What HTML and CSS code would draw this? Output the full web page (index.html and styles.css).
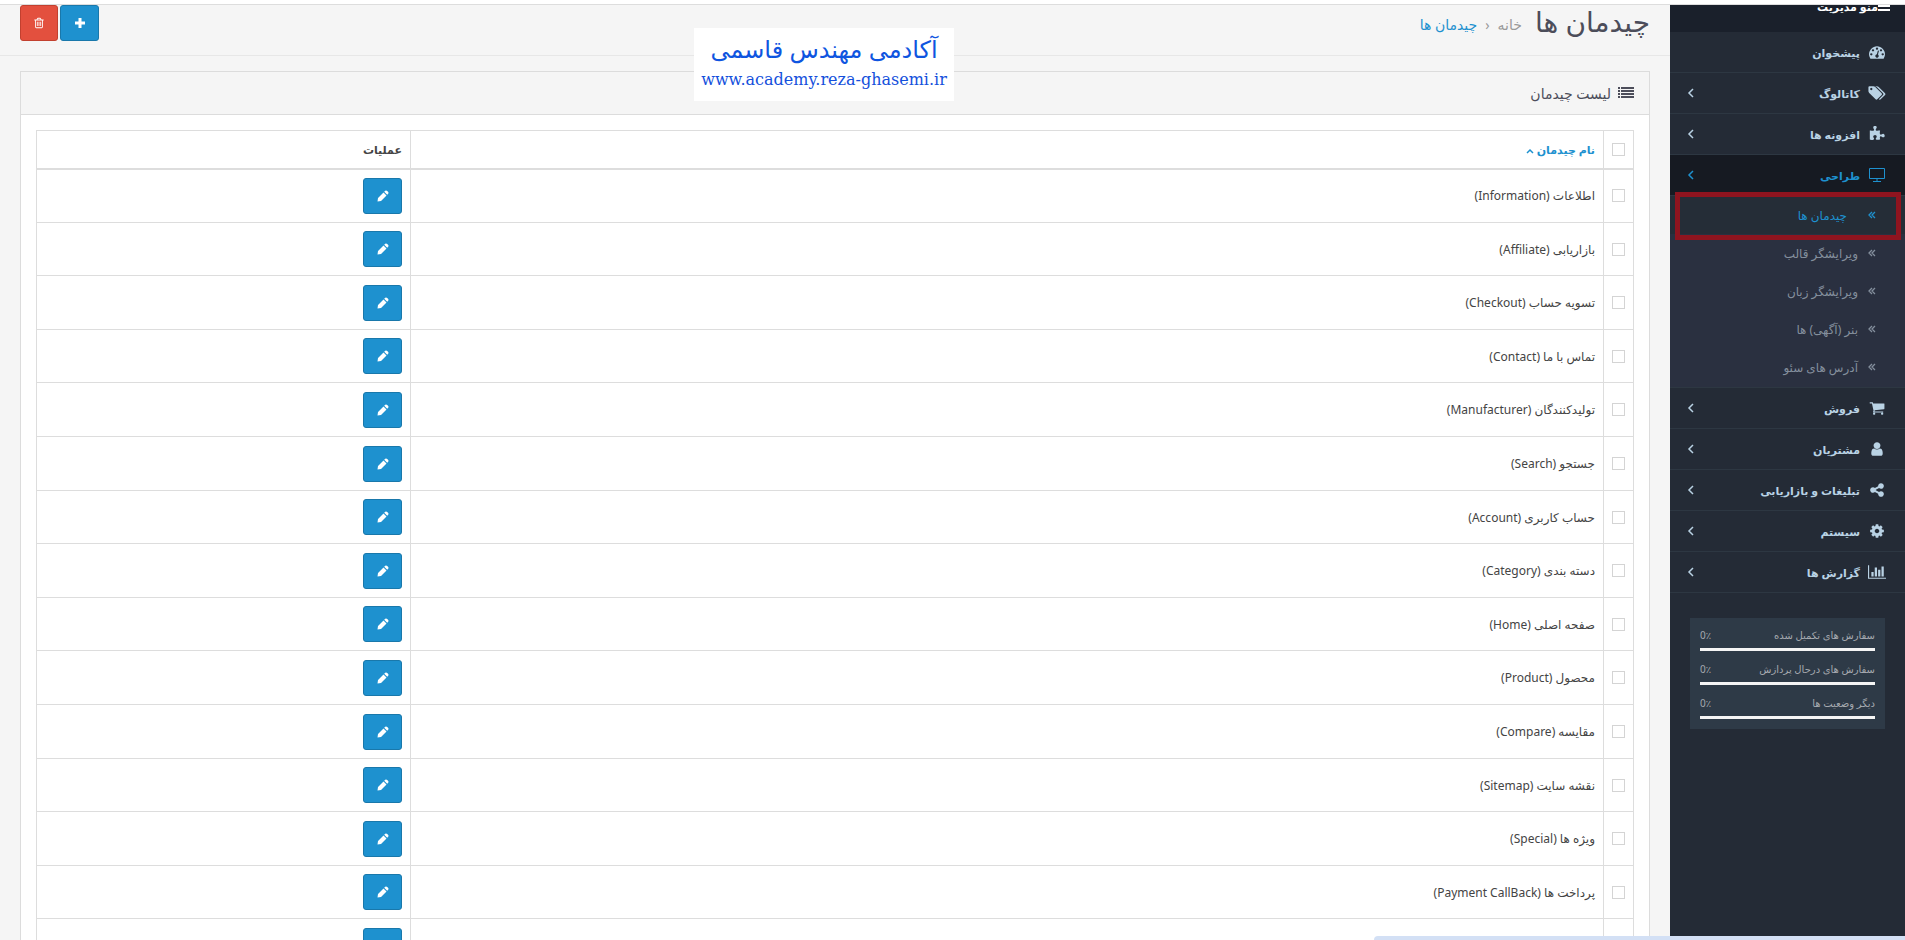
FILE: index.html
```html
<!DOCTYPE html>
<html lang="fa" dir="rtl">
<head>
    <meta charset="UTF-8">
    <meta name="viewport" content="width=device-width, initial-scale=1.0">
    <title>چیدمان ها</title>
    <link rel="stylesheet" href="styles.css">
</head>
<body>
    <svg class="sprite" aria-hidden="true">
        <symbol id="dashboard" viewBox="0 0 1792 1792"><path d="M384 1152q0-53-37.500-90.500t-90.500-37.500-90.500 37.500-37.500 90.500 37.500 90.500 90.500 37.500 90.500-37.500 37.500-90.500zm192-448q0-53-37.500-90.500t-90.500-37.500-90.500 37.500-37.500 90.500 37.500 90.500 90.500 37.500 90.500-37.500 37.500-90.500zm428 481l101-382q6-26-7.500-48.500t-38.500-29.500-48 6.500-30 39.500l-101 382q-60 5-107 43.500t-63 98.500q-20 77 20 146t117 89 146-20 89-117q16-60-6-117t-72-91zm660-33q0-53-37.500-90.500t-90.500-37.500-90.500 37.500-37.500 90.500 37.500 90.500 90.500 37.500 90.500-37.500 37.500-90.500zm-640-640q0-53-37.500-90.500t-90.500-37.500-90.500 37.500-37.500 90.500 37.500 90.500 90.500 37.500 90.500-37.500 37.500-90.500zm448 192q0-53-37.500-90.500t-90.500-37.500-90.500 37.500-37.500 90.500 37.500 90.500 90.500 37.500 90.500-37.500 37.500-90.500zm320 448q0 261-141 483-19 29-54 29h-1402q-35 0-54-29-141-221-141-483 0-182 71-348t191-286 286-191 348-71 348 71 286 191 191 286 71 348z"/></symbol>
        <symbol id="tags" viewBox="0 0 1920 1792"><path d="M448 448q0-53-37.500-90.500t-90.500-37.500-90.500 37.500-37.500 90.500 37.500 90.500 90.500 37.500 90.500-37.500 37.500-90.500zm1067 576q0 53-37 90l-491 492q-39 37-91 37-53 0-90-37l-715-716q-38-37-64.500-101t-26.500-117v-416q0-52 38-90t90-38h416q53 0 117 26.500t102 64.500l715 714q37 39 37 91zm384 0q0 53-37 90l-491 492q-39 37-91 37-36 0-59-14t-53-45l470-470q37-37 37-90 0-52-37-91l-715-714q-38-38-102-64.500t-117-26.500h224q53 0 117 26.500t102 64.500l715 714q37 39 37 91z"/></symbol>
        <symbol id="puzzle" viewBox="0 0 1792 1792"><path d="M1755 1083q0 81-44.500 135t-123.500 54q-41 0-77.500-17.500t-59-38-56.500-38-71-17.500q-110 0-110 124 0 39 16 115t15 115v5q-22 0-33 1-34 3-97.500 11.500t-115.500 13.500-98 5q-61 0-103-26.500t-42-83.500q0-37 17.500-71t38-56.500 38-59 17.500-77.500q0-79-54-123.500t-135-44.500q-84 0-143 45.500t-59 127.500q0 43 15 83t33.500 64.500 33.500 53 15 50.500q0 45-46 89-37 35-117 35-95 0-245-24-9-2-27.500-4t-27.500-4l-13-2q-1 0-3-1-2 0-2-1v-1024q2 1 17.500 3.500t34 5 21.500 3.500q150 24 245 24 80 0 117-35 46-44 46-89 0-22-15-50.500t-33.500-53-33.500-64.500-15-83q0-82 59-127.500t144-45.500q80 0 134 44.500t54 123.500q0 41-17.500 77.500t-38 59-38 56.500-17.500 71q0 57 42 83.500t103 26.500q64 0 180-15t163-17v2q-1 2-3.500 17.500t-5 34-3.500 21.500q-24 150-24 245 0 80 35 117 44 46 89 46 22 0 50.500-15t53-33.500 64.500-33.500 83-15q82 0 127.500 59t45.500 143z"/></symbol>
        <symbol id="desktop" viewBox="0 0 18 16"><path d="M1.500 1.500h15v10h-15zM9 11.500v2.500M5 14.500h8" fill="none" stroke="currentColor"/></symbol>
        <symbol id="cart" viewBox="0 0 1792 1792"><path d="M704 1536q0 52-38 90t-90 38-90-38-38-90 38-90 90-38 90 38 38 90zm896 0q0 52-38 90t-90 38-90-38-38-90 38-90 90-38 90 38 38 90zm128-1088v512q0 24-16.500 42.500t-40.500 21.500l-1044 122q13 60 13 70 0 16-24 64h920q26 0 45 19t19 45-19 45-45 19h-1024q-26 0-45-19t-19-45q0-11 8-31.500t16-36 21.500-40 15.500-29.500l-177-823h-204q-26 0-45-19t-19-45 19-45 45-19h256q16 0 28.500 6.500t19.500 15.500 13 24.500 8 26 5.500 29.500 4.500 26h1201q26 0 45 19t19 45z"/></symbol>
        <symbol id="user" viewBox="128 0 1536 1792"><path d="M1536 1399q0 109-62.500 187t-150.500 78h-854q-88 0-150.500-78t-62.500-187q0-85 8.500-160.500t31.500-152 58.500-131 94-89 134.500-34.500q131 128 313 128t313-128q76 0 134.500 34.500t94 89 58.500 131 31.500 152 8.500 160.500zm-256-887q0 159-112.500 271.500t-271.500 112.500-271.500-112.500-112.500-271.500 112.500-271.500 271.500-112.500 271.500 112.500 112.500 271.500z"/></symbol>
        <symbol id="share" viewBox="0 0 1792 1792"><path d="M1344 1024q133 0 226.500 93.500t93.500 226.500-93.500 226.500-226.500 93.500-226.500-93.500-93.500-226.500q0-12 2-34l-360-180q-92 86-218 86-133 0-226.500-93.500t-93.500-226.500 93.500-226.500 226.500-93.500q126 0 218 86l360-180q-2-22-2-34 0-133 93.500-226.500t226.500-93.500 226.500 93.500 93.500 226.500-93.500 226.500-226.500 93.500q-126 0-218-86l-360 180q2 22 2 34t-2 34l360 180q92-86 218-86z"/></symbol>
        <symbol id="cog" viewBox="0 0 1792 1792"><path d="M1152 896q0-106-75-181t-181-75-181 75-75 181 75 181 181 75 181-75 75-181zm512-109v222q0 12-8 23t-20 13l-185 28q-19 54-39 91 35 50 107 138 10 12 10 25t-9 23q-27 37-99 108t-94 71q-12 0-26-9l-138-108q-44 23-91 38-16 136-29 186-7 28-36 28h-222q-14 0-24.500-8.500t-11.500-21.500l-28-184q-49-16-90-37l-141 107q-10 9-25 9-14 0-25-11-126-114-165-168-7-10-7-23 0-12 8-23 15-21 51-66.500t54-70.500q-27-50-41-99l-183-27q-13-2-21-12.500t-8-23.500v-222q0-12 8-23t19-13l186-28q14-46 39-92-40-57-107-138-10-12-10-24 0-10 9-23 26-36 98.500-107.500t94.500-71.500q13 0 26 10l138 107q44-23 91-38 16-136 29-186 7-28 36-28h222q14 0 24.500 8.500t11.500 21.500l28 184q49 16 90 37l142-107q9-9 24-9 13 0 25 10 129 119 165 170 7 8 7 22 0 12-8 23-15 21-51 66.500t-54 70.500q26 50 41 98l183 28q13 2 21 12.500t8 23.500z"/></symbol>
        <symbol id="chart" viewBox="0 0 2048 1792"><path d="M640 896v512h-256v-512h256zm384-512v1024h-256v-1024h256zm1024 1152v128h-2048v-1536h128v1408h1920zm-640-896v768h-256v-768h256zm384-384v1152h-256v-1152h256z"/></symbol>
        <symbol id="pencil" viewBox="0 0 12 12"><path d="M.5 11.500l.5-3.500 5.500-5.500 3 3-5.500 5.500zM7.200 1.800l1-1q1-.8 2 .2l.8.800q1 1 .2 2l-1 1z"/></symbol>
        <symbol id="trash" viewBox="0 0 1792 1792"><path d="M704 736v576q0 14-9 23t-23 9h-64q-14 0-23-9t-9-23v-576q0-14 9-23t23-9h64q14 0 23 9t9 23zm256 0v576q0 14-9 23t-23 9h-64q-14 0-23-9t-9-23v-576q0-14 9-23t23-9h64q14 0 23 9t9 23zm256 0v576q0 14-9 23t-23 9h-64q-14 0-23-9t-9-23v-576q0-14 9-23t23-9h64q14 0 23 9t9 23zm128 724v-948h-896v948q0 22 7 40.500t14.500 27 10.500 8.500h832q3 0 10.500-8.500t14.500-27 7-40.500zm-672-1076h448l-48-117q-7-9-17-11h-317q-10 2-17 11zm928 32v64q0 14-9 23t-23 9h-96v948q0 83-47 143.500t-113 60.500h-832q-66 0-113-58.500t-47-141.500v-952h-96q-14 0-23-9t-9-23v-64q0-14 9-23t23-9h309l70-167q15-37 54-63t79-26h320q40 0 79 26t54 63l70 167h309q14 0 23 9t9 23z"/></symbol>
        <symbol id="plus" viewBox="0 0 12 12"><path d="M4.500 1h3v3.500h3.500v3h-3.500v3.500h-3v-3.500h-3.500v-3h3.500z"/></symbol>
        <symbol id="list" viewBox="0 0 16 14"><path d="M0 1h2v2h-2zM3 1h13v2h-13zM0 4h2v2h-2zM3 4h13v2h-13zM0 7h2v2h-2zM3 7h13v2h-13zM0 10h2v2h-2zM3 10h13v2h-13z"/></symbol>
        <symbol id="bars" viewBox="0 0 12 12"><path d="M0 1h12v2h-12zM0 5h12v2h-12zM0 9h12v2h-12z"/></symbol>
        <symbol id="angle" viewBox="0 0 8 10"><path d="M6 1L2 5l4 4" fill="none" stroke="currentColor" stroke-width="1.500"/></symbol>
        <symbol id="double" viewBox="0 0 8 8"><path d="M4 1L1 4l3 3M7 1L4 4l3 3" fill="none" stroke="currentColor" stroke-width="1.300"/></symbol>
        <symbol id="up" viewBox="0 0 8 6"><path d="M1 5l3-3 3 3" fill="none" stroke="currentColor" stroke-width="1.500"/></symbol>
    </svg>

    <div class="topbar"></div>
    <div class="wrapper">
        <nav class="sidebar">
            <div class="menu-title"><svg><use href="#bars"/></svg>منو مدیریت</div>
            <ul class="menu">
                <li><a href="#"><svg class="icon"><use href="#dashboard"/></svg>پیشخوان</a></li>
                <li><a href="#"><svg class="icon"><use href="#tags"/></svg>کاتالوگ<svg class="angle"><use href="#angle"/></svg></a></li>
                <li><a href="#"><svg class="icon"><use href="#puzzle"/></svg>افزونه ها<svg class="angle"><use href="#angle"/></svg></a></li>
                <li class="open">
                    <a href="#"><svg class="icon"><use href="#desktop"/></svg>طراحی<svg class="angle"><use href="#angle"/></svg></a>
                    <ul class="submenu">
                        <li class="current"><a href="#"><svg><use href="#double"/></svg>چیدمان ها</a></li>
                        <li><a href="#"><svg><use href="#double"/></svg>ویرایشگر قالب</a></li>
                        <li><a href="#"><svg><use href="#double"/></svg>ویرایشگر زبان</a></li>
                        <li><a href="#"><svg><use href="#double"/></svg>بنر (آگهی) ها</a></li>
                        <li><a href="#"><svg><use href="#double"/></svg>آدرس های سئو</a></li>
                    </ul>
                </li>
                <li><a href="#"><svg class="icon"><use href="#cart"/></svg>فروش<svg class="angle"><use href="#angle"/></svg></a></li>
                <li><a href="#"><svg class="icon"><use href="#user"/></svg>مشتریان<svg class="angle"><use href="#angle"/></svg></a></li>
                <li><a href="#"><svg class="icon"><use href="#share"/></svg>تبلیغات و بازاریابی<svg class="angle"><use href="#angle"/></svg></a></li>
                <li><a href="#"><svg class="icon"><use href="#cog"/></svg>سیستم<svg class="angle"><use href="#angle"/></svg></a></li>
                <li><a href="#"><svg class="icon"><use href="#chart"/></svg>گزارش ها<svg class="angle"><use href="#angle"/></svg></a></li>
            </ul>
            <ul class="stats">
                <li><div><span>سفارش های تکمیل شده</span><span dir="ltr">0٪</span></div></li>
                <li><div><span>سفارش های درحال پردازش</span><span dir="ltr">0٪</span></div></li>
                <li><div><span>دیگر وضعیت ها</span><span dir="ltr">0٪</span></div></li>
            </ul>
        </nav>

        <main class="content">
            <header class="page-header">
                <h1>چیدمان ها</h1>
                <div class="breadcrumb">
                    <a href="#">خانه</a>
                    <span>‹</span>
                    <a href="#" class="active">چیدمان ها</a>
                </div>
                <div class="buttons">
                    <button type="button" class="btn" aria-label="افزودن"><svg><use href="#plus"/></svg></button>
                    <button type="button" class="btn danger" aria-label="حذف"><svg><use href="#trash"/></svg></button>
                </div>
            </header>

            <section class="panel">
                <h2><svg><use href="#list"/></svg>لیست چیدمان</h2>
                <div class="panel-body">
                    <table>
                        <thead>
                            <tr>
                                <th class="check"><input type="checkbox" aria-label="انتخاب همه"></th>
                                <th><a href="#">نام چیدمان <svg><use href="#up"/></svg></a></th>
                                <th class="action">عملیات</th>
                            </tr>
                        </thead>
                        <tbody>
                            <tr>
                                <td><input type="checkbox" aria-label="Information"></td>
                                <td>اطلاعات (Information)</td>
                                <td><button type="button" class="btn" aria-label="ویرایش"><svg><use href="#pencil"/></svg></button></td>
                            </tr>
                            <tr>
                                <td><input type="checkbox" aria-label="Affiliate"></td>
                                <td>بازاریابی (Affiliate)</td>
                                <td><button type="button" class="btn" aria-label="ویرایش"><svg><use href="#pencil"/></svg></button></td>
                            </tr>
                            <tr>
                                <td><input type="checkbox" aria-label="Checkout"></td>
                                <td>تسویه حساب (Checkout)</td>
                                <td><button type="button" class="btn" aria-label="ویرایش"><svg><use href="#pencil"/></svg></button></td>
                            </tr>
                            <tr>
                                <td><input type="checkbox" aria-label="Contact"></td>
                                <td>تماس با ما (Contact)</td>
                                <td><button type="button" class="btn" aria-label="ویرایش"><svg><use href="#pencil"/></svg></button></td>
                            </tr>
                            <tr>
                                <td><input type="checkbox" aria-label="Manufacturer"></td>
                                <td>تولیدکنندگان (Manufacturer)</td>
                                <td><button type="button" class="btn" aria-label="ویرایش"><svg><use href="#pencil"/></svg></button></td>
                            </tr>
                            <tr>
                                <td><input type="checkbox" aria-label="Search"></td>
                                <td>جستجو (Search)</td>
                                <td><button type="button" class="btn" aria-label="ویرایش"><svg><use href="#pencil"/></svg></button></td>
                            </tr>
                            <tr>
                                <td><input type="checkbox" aria-label="Account"></td>
                                <td>حساب کاربری (Account)</td>
                                <td><button type="button" class="btn" aria-label="ویرایش"><svg><use href="#pencil"/></svg></button></td>
                            </tr>
                            <tr>
                                <td><input type="checkbox" aria-label="Category"></td>
                                <td>دسته بندی (Category)</td>
                                <td><button type="button" class="btn" aria-label="ویرایش"><svg><use href="#pencil"/></svg></button></td>
                            </tr>
                            <tr>
                                <td><input type="checkbox" aria-label="Home"></td>
                                <td>صفحه اصلی (Home)</td>
                                <td><button type="button" class="btn" aria-label="ویرایش"><svg><use href="#pencil"/></svg></button></td>
                            </tr>
                            <tr>
                                <td><input type="checkbox" aria-label="Product"></td>
                                <td>محصول (Product)</td>
                                <td><button type="button" class="btn" aria-label="ویرایش"><svg><use href="#pencil"/></svg></button></td>
                            </tr>
                            <tr>
                                <td><input type="checkbox" aria-label="Compare"></td>
                                <td>مقایسه (Compare)</td>
                                <td><button type="button" class="btn" aria-label="ویرایش"><svg><use href="#pencil"/></svg></button></td>
                            </tr>
                            <tr>
                                <td><input type="checkbox" aria-label="Sitemap"></td>
                                <td>نقشه سایت (Sitemap)</td>
                                <td><button type="button" class="btn" aria-label="ویرایش"><svg><use href="#pencil"/></svg></button></td>
                            </tr>
                            <tr>
                                <td><input type="checkbox" aria-label="Special"></td>
                                <td>ویژه ها (Special)</td>
                                <td><button type="button" class="btn" aria-label="ویرایش"><svg><use href="#pencil"/></svg></button></td>
                            </tr>
                            <tr>
                                <td><input type="checkbox" aria-label="Payment CallBack"></td>
                                <td>پرداخت ها (Payment CallBack)</td>
                                <td><button type="button" class="btn" aria-label="ویرایش"><svg><use href="#pencil"/></svg></button></td>
                            </tr>
                            <tr>
                                <td></td>
                                <td></td>
                                <td><button type="button" class="btn" aria-label="ویرایش"><svg><use href="#pencil"/></svg></button></td>
                            </tr>
                        </tbody>
                    </table>
                </div>
            </section>
        </main>
    </div>

    <div class="watermark">
        <strong>آکادمی مهندس قاسمی</strong>
        <span dir="ltr">www.academy.reza-ghasemi.ir</span>
    </div>
    <div class="status"></div>
</body>
</html>
```
FILE: styles.css
```css
* {
    box-sizing: border-box;
}

body {
    margin: 0;
    height: 100vh;
    overflow: hidden;
    display: flex;
    flex-direction: column;
    font-family: "Noto Sans", "DejaVu Sans", sans-serif;
    font-size: 12px;
    color: #4c4d5a;
    background: #f5f5f5;
}

ul {
    list-style: none;
    margin: 0;
    padding: 0;
}

a {
    color: #1e91cf;
    text-decoration: none;
}

svg {
    fill: currentColor;
    flex: none;
}

.sprite {
    position: absolute;
    width: 0;
    height: 0;
}

.topbar {
    flex: none;
    height: 5px;
    background: #fff;
    border-bottom: 1px solid #ddd;
}

.wrapper {
    display: flex;
    flex: 1;
    min-height: 0;
}

/* sidebar */
.sidebar {
    width: 235px;
    flex: none;
    background: #242b36;
}

.menu-title {
    height: 27px;
    padding-right: 15px;
    overflow: hidden;
    display: flex;
    align-items: flex-start;
    font-size: 11px;
    line-height: 4px;
    font-weight: bold;
    color: #fff;
    background: #1a202b;
}

.menu-title svg {
    width: 12px;
    height: 12px;
    margin-top: -5px;
}

.menu > li > a {
    display: flex;
    align-items: center;
    height: 41px;
    padding: 0 19px 0 17px;
    border-bottom: 1px solid #2d3742;
    font-size: 11px;
    font-weight: bold;
    color: #b9d2e4;
}

.menu .icon {
    width: 18px;
    height: 16px;
    margin-left: 8px;
}

.menu .angle {
    width: 8px;
    height: 10px;
    margin-right: auto;
}

.menu > .open > a {
    color: #1e91cf;
    background: #161a22;
}

.submenu {
    position: relative;
    padding-bottom: 1px;
    background: #2a3040;
    border-bottom: 1px solid #2d3742;
}

/* highlight frame around the selected entry */
.submenu::before {
    content: "";
    box-sizing: border-box;
    position: absolute;
    top: -4px;
    right: 4px;
    left: 5px;
    height: 48px;
    border: 5px solid #8f141f;
}

.submenu a {
    display: flex;
    align-items: center;
    height: 38px;
    padding-right: 29px;
    color: #848f9d;
}

.submenu svg {
    width: 8px;
    height: 8px;
    margin-left: 10px;
}

.submenu .current a {
    color: #1e91cf;
    background: #252d37;
}

.submenu .current svg {
    margin-left: 21px;
}

.stats {
    margin: 25px 20px 0;
    padding: 9px 10px 0;
    overflow: hidden;
    background: #2e3a47;
    color: #a5a9af;
    font-size: 10px;
}

.stats li {
    margin-bottom: 10px;
    border-bottom: 3px solid #f5f5f5;
}

.stats div {
    display: flex;
    justify-content: space-between;
    height: 21px;
    line-height: 16px;
}

/* content */
.content {
    flex: 1;
    min-width: 0;
}

.page-header {
    display: flex;
    align-items: flex-start;
    height: 51px;
    padding: 0 20px;
    border-bottom: 1px solid #e7e7e7;
}

h1 {
    margin: 0;
    font-size: 28px;
    font-weight: normal;
    line-height: 32px;
}

.breadcrumb {
    display: flex;
    gap: 8px;
    margin-right: 13px;
    font-size: 14px;
    line-height: 40px;
}

.breadcrumb a,
.breadcrumb span {
    color: #999;
}

.breadcrumb .active {
    color: #1e91cf;
}

.buttons {
    display: flex;
    gap: 2px;
    margin-right: auto;
}

.btn {
    display: flex;
    align-items: center;
    justify-content: center;
    width: 39px;
    height: 36px;
    padding: 0;
    border: 1px solid #1978ab;
    border-radius: 3px;
    background: #1e91cf;
    color: #fff;
}

.btn svg {
    width: 12px;
    height: 12px;
}

.btn.danger {
    width: 38px;
    background: #e3503e;
    border-color: #c2402f;
}

.panel {
    margin: 15px 20px;
    background: #fff;
    border: 1px solid #dcdcdc;
}

.panel h2 {
    display: flex;
    align-items: center;
    gap: 7px;
    height: 43px;
    margin: 0;
    padding: 0 15px;
    font-size: 14px;
    font-weight: normal;
    background: #f5f5f5;
    border-bottom: 1px solid #dcdcdc;
}

.panel h2 svg {
    width: 16px;
    height: 14px;
}

.panel-body {
    padding: 15px;
}

table {
    width: 100%;
    border-collapse: collapse;
    table-layout: fixed;
    color: #444;
}

th,
td {
    padding: 0 8px;
    border: 1px solid #ddd;
    text-align: right;
}

th {
    height: 38px;
    border-bottom-width: 2px;
    font-size: 11px;
}

td {
    height: 54px;
}

/* keeps the row rhythm between 53 and 54 pixels */
tr:nth-child(5n + 2) td,
tr:nth-child(5n + 4) td {
    height: 53px;
}

.check {
    width: 30px;
}

.action {
    width: 374px;
}

th svg {
    width: 8px;
    height: 6px;
    vertical-align: middle;
}

input[type="checkbox"] {
    appearance: none;
    display: block;
    width: 13px;
    height: 13px;
    margin: 0;
    border: 1px solid #d4d4d4;
    background: #fff;
}

/* overlays */
.watermark {
    position: absolute;
    top: 28px;
    left: 694px;
    width: 260px;
    height: 73px;
    display: flex;
    flex-direction: column;
    align-items: center;
    background: #fff;
    color: #1450dc;
}

.watermark strong {
    font-size: 24px;
    font-weight: normal;
    line-height: 42px;
    color: #0f55e0;
}

.watermark span {
    font-family: "DejaVu Serif", serif;
    font-size: 16px;
    line-height: 20px;
}

.status {
    position: absolute;
    right: 0;
    bottom: 0;
    width: 531px;
    height: 4px;
    background: #d3e0f5;
    border-top-left-radius: 4px;
}
```
